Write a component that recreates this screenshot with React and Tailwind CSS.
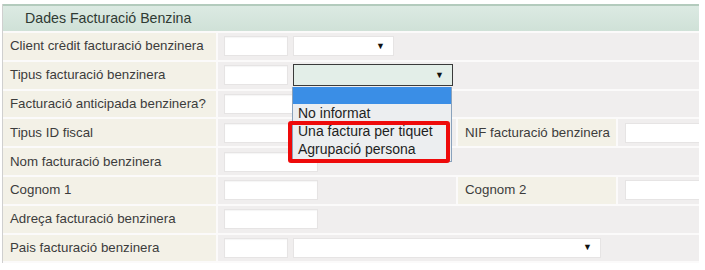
const Input = ({ w = 'w-[64px]' }) => (
  <div className={`${w} h-[20px] bg-white border border-[#e6e4e4] shadow-[inset_0_1px_1px_rgba(0,0,0,0.04)] shrink-0`} />
);

const Select = ({ w, active }) => (
  <div
    className={`${w} h-[20px] shrink-0 flex items-center justify-end pr-[8px] ${
      active ? 'bg-[#e3eee8] border border-[#3a3a3a] h-[22px]' : 'bg-white border border-[#e6e4e4]'
    }`}
  >
    <span className="text-[9px] leading-none text-[#111]">▼</span>
  </div>
);

const Label = ({ children, w = 'w-[213px]' }) => (
  <div className={`${w} shrink-0 bg-[#f3f1e7] flex items-center pl-[7px] text-[13.3px] text-[#3c3c3c] whitespace-nowrap`}>
    {children}
  </div>
);

const Cell = ({ children, w = 'flex-1' }) => (
  <div className={`${w} bg-[#f0eeee] flex items-center pl-[6px] gap-[5px] min-w-0 overflow-hidden`}>{children}</div>
);

const Row = ({ children }) => <div className="h-[26.8px] flex gap-[2px]">{children}</div>;

export default function App() {
  return (
    <div className="w-[705px] h-[270px] bg-white relative overflow-hidden font-['Liberation_Sans',Arial,sans-serif]">
      <div className="ml-[2px] mt-[4px] w-[697px] border-l border-[#cfcfcf] bg-[#fbfafa]">
        <div className="h-[27px] border-t-2 border-[#b3cbbd] bg-gradient-to-b from-[#dceae3] to-[#cfe1d7] flex items-center pl-[22px] text-[14.2px] text-[#2f3a33]">
          Dades Facturació Benzina
        </div>
        <div className="flex flex-col gap-[2px] pt-[2px] pb-[2px]">
          <Row>
            <Label>Client crèdit facturació benzinera</Label>
            <Cell>
              <Input />
              <Select w="w-[101px]" />
            </Cell>
          </Row>
          <Row>
            <Label>Tipus facturació benzinera</Label>
            <Cell>
              <Input />
              <Select w="w-[160px]" active />
            </Cell>
          </Row>
          <Row>
            <Label>Facturació anticipada benzinera?</Label>
            <Cell>
              <Input w="w-[94px]" />
            </Cell>
          </Row>
          <Row>
            <Label>Tipus ID fiscal</Label>
            <Cell w="w-[238px] shrink-0">
              <Input w="w-[94px]" />
            </Cell>
            <Label w="w-[158px]">NIF facturació benzinera</Label>
            <Cell>
              <div className="ml-[1px] w-[100px] h-[20px] bg-white border border-[#e6e4e4] shrink-0" />
            </Cell>
          </Row>
          <Row>
            <Label>Nom facturació benzinera</Label>
            <Cell>
              <Input w="w-[94px]" />
            </Cell>
          </Row>
          <Row>
            <Label>Cognom 1</Label>
            <Cell w="w-[238px] shrink-0">
              <Input w="w-[94px]" />
            </Cell>
            <Label w="w-[158px]">Cognom 2</Label>
            <Cell>
              <div className="ml-[1px] w-[100px] h-[20px] bg-white border border-[#e6e4e4] shrink-0" />
            </Cell>
          </Row>
          <Row>
            <Label>Adreça facturació benzinera</Label>
            <Cell>
              <Input w="w-[94px]" />
            </Cell>
          </Row>
          <Row>
            <Label>Pais facturació benzinera</Label>
            <Cell>
              <Input />
              <Select w="w-[308px]" />
            </Cell>
          </Row>
        </div>
      </div>

      {/* open dropdown list */}
      <div className="absolute left-[292px] top-[87px] w-[160px] h-[75px] bg-[#eceef0] border-l border-r border-b border-[#8aa2bc] text-[14px] leading-[18px] text-[#1e1e1e] whitespace-nowrap">
        <div className="h-[17px] bg-[#3a8ee6]" />
        <div className="pl-[5px]">No informat</div>
        <div className="pl-[5px]">Una factura per tiquet</div>
        <div className="pl-[5px]">Agrupació persona</div>
      </div>

      {/* highlight box */}
      <div className="absolute left-[288px] top-[121px] w-[162px] h-[42px] border-4 border-[#ee0a0a] rounded-[3px]" />
    </div>
  );
}
